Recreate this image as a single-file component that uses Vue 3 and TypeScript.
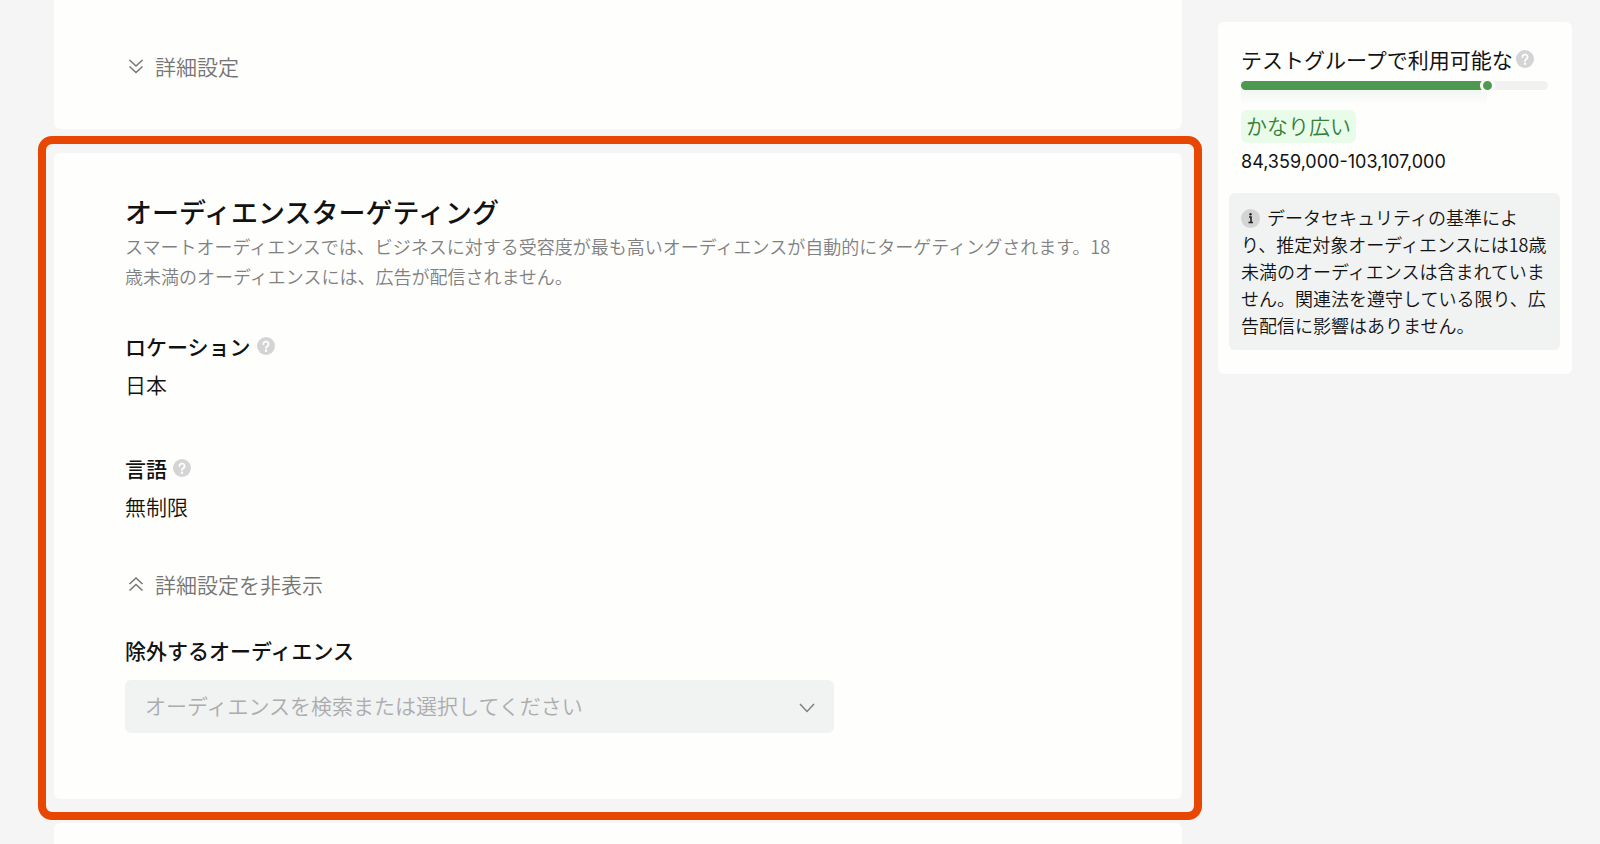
<script setup lang="ts">
import { ref } from 'vue'

interface Field {
  label: string
  value: string
}

const fields: Field[] = [
  { label: 'ロケーション', value: '日本' },
  { label: '言語', value: '無制限' },
]

const reach = 80
const advancedOpen = ref(true)
const groupOpen = ref(false)
</script>

<template>
  <div class="page">
    <main class="main">
      <section class="card card-top">
        <button type="button" class="toggle" :aria-expanded="groupOpen" @click="groupOpen = !groupOpen">
          <svg class="double" viewBox="0 0 16 16" aria-hidden="true">
            <path d="M1.5 2l6.5 6 6.5-6M1.5 8.500l6.500 6 6.500-6" />
          </svg>
          <span>詳細設定</span>
        </button>
      </section>

      <div class="frame">
        <section class="card targeting">
          <h2 class="title">オーディエンスターゲティング</h2>
          <p class="desc">
            スマートオーディエンスでは、ビジネスに対する受容度が最も高いオーディエンスが自動的にターゲティングされます。18歳未満のオーディエンスには、広告が配信されません。
          </p>

          <dl class="fields">
            <div v-for="field in fields" :key="field.label" class="field">
              <dt class="label">
                {{ field.label }}
                <button type="button" class="help" :aria-label="field.label">
                  <svg viewBox="0 0 18 18" aria-hidden="true">
                    <circle cx="9" cy="9" r="9" />
                    <path d="M6.400 7a2.600 2.500 0 1 1 4.200 2c-.9.700-1.600 1-1.600 2.100" />
                    <circle class="dot" cx="9" cy="13.700" r="1.200" />
                  </svg>
                </button>
              </dt>
              <dd class="value">{{ field.value }}</dd>
            </div>
          </dl>

          <button type="button" class="toggle" :aria-expanded="advancedOpen" @click="advancedOpen = !advancedOpen">
            <svg class="double" viewBox="0 0 16 16" aria-hidden="true">
              <path d="M1.500 8l6.500-6 6.500 6M1.500 14.500l6.500-6 6.500 6" />
            </svg>
            <span>{{ advancedOpen ? '詳細設定を非表示' : '詳細設定' }}</span>
          </button>

          <div v-show="advancedOpen" class="exclude">
            <label class="label" for="exclude">除外するオーディエンス</label>
            <div class="select-box">
              <select id="exclude" class="select">
                <option value="">オーディエンスを検索または選択してください</option>
              </select>
              <svg class="chevron" viewBox="0 0 16 10" aria-hidden="true">
                <path d="M1 1l7 7.500 7-7.500" />
              </svg>
            </div>
          </div>
        </section>
      </div>

      <section class="card card-next"></section>
    </main>

    <aside class="card side">
      <h3 class="side-title">
        テストグループで利用可能な
        <button type="button" class="help" aria-label="ヘルプ">
          <svg viewBox="0 0 18 18" aria-hidden="true">
            <circle cx="9" cy="9" r="9" />
            <path d="M6.400 7a2.600 2.500 0 1 1 4.200 2c-.9.700-1.600 1-1.600 2.100" />
            <circle class="dot" cx="9" cy="13.700" r="1.200" />
          </svg>
        </button>
      </h3>
      <div class="meter" role="progressbar" :aria-valuenow="reach" aria-valuemin="0" aria-valuemax="100">
        <div class="meter-fill" :style="{ width: reach + '%' }"></div>
      </div>
      <span class="tag">かなり広い</span>
      <p class="range">84,359,000-103,107,000</p>
      <p class="note">
        <svg class="info" viewBox="0 0 19 19" aria-hidden="true">
          <circle cx="9.500" cy="9.500" r="9.500" />
          <path d="M8 8h2v5.500M7.500 13.500h4.500" />
          <circle class="dot" cx="9.500" cy="5.300" r="1.200" />
        </svg>データセキュリティの基準により、推定対象オーディエンスには18歳未満のオーディエンスは含まれていません。関連法を遵守している限り、広告配信に影響はありません。
      </p>
    </aside>
  </div>
</template>

<style>
body {
  background: #f5f5f5;
}
</style>

<style scoped>
.page {
  display: flex;
  align-items: flex-start;
  gap: 16px;
  box-sizing: border-box;
  min-height: 100vh;
  padding: 0 28px 0 38px;
  background: #f5f5f5;
  color: #121212;
  font-family: "Noto Sans CJK JP", sans-serif;
  font-size: 21px;
  font-weight: 350;
  line-height: 28px;
  text-spacing-trim: space-all;
}

.page *,
.page *::before,
.page *::after {
  box-sizing: border-box;
}

h2,
h3,
p,
dl,
dd {
  margin: 0;
}

button {
  padding: 0;
  border: 0;
  background: none;
  color: inherit;
  font: inherit;
  cursor: pointer;
}

svg {
  fill: none;
}

.main {
  display: flex;
  flex: 1;
  flex-direction: column;
  min-width: 0;
  min-height: 100vh;
}

.card {
  border-radius: 6px;
  background: #fefefd;
}

.card-top {
  margin: 0 20px 7px 16px;
  padding: 52px 71px 49px;
  border-radius: 0 0 6px 6px;
}

.card-next {
  flex: 1;
  margin: 3px 20px 0 16px;
  border-radius: 6px 6px 0 0;
}

.frame {
  padding: 9px 12px 13px 8px;
  border: 8px solid #e84703;
  border-radius: 14px;
}

.targeting {
  padding: 43px 62px 66px 71px;
}

.title {
  font-size: 27px;
  font-weight: 500;
  line-height: 32px;
}

.desc {
  margin-top: 3px;
  color: #808080;
  font-size: 18px;
  line-height: 30px;
}

.fields {
  display: grid;
  gap: 56px;
  margin: 41px 0 50px;
}

.field {
  display: grid;
  gap: 10px;
}

.label {
  display: flex;
  align-items: center;
  gap: 6px;
  font-weight: 500;
}

.help {
  flex: none;
  width: 18px;
  height: 18px;
}

.help svg {
  display: block;
  fill: #d4d4d4;
}

.help path {
  fill: none;
  stroke: #fff;
  stroke-width: 1.8;
  stroke-linecap: round;
}

.help .dot {
  fill: #fff;
}

.toggle {
  display: flex;
  align-items: center;
  gap: 11px;
  padding-left: 3px;
  color: #757575;
}

.double {
  width: 16px;
  height: 16px;
  stroke: currentColor;
  stroke-width: 1.5;
}

.exclude {
  display: grid;
  gap: 16px;
  max-width: 709px;
  margin-top: 38px;
}

.select-box {
  position: relative;
}

.select {
  display: block;
  width: 100%;
  height: 53px;
  padding: 0 48px 4px 20px;
  border: 0;
  border-radius: 6px;
  background: #f1f2f2;
  color: #acacac;
  font: inherit;
  appearance: none;
}

.chevron {
  position: absolute;
  top: 23px;
  right: 19px;
  width: 16px;
  height: 10px;
  stroke: #808080;
  stroke-width: 1.5;
  pointer-events: none;
}

.side {
  flex: none;
  width: 354px;
  margin-top: 22px;
  padding: 23px 12px 24px 11px;
}

.side-title {
  display: flex;
  align-items: center;
  gap: 3px;
  margin-left: 12px;
  font-size: 21px;
  font-weight: 400;
  white-space: nowrap;
}

.meter {
  height: 9px;
  margin: 8px 12px 20px;
  border-radius: 5px;
  background: #f1f1f1;
}

.meter-fill {
  position: relative;
  height: 9px;
  border-radius: 5px;
  background: #4c994f;
}

.meter-fill::before {
  content: "";
  position: absolute;
  top: 9px;
  left: 0;
  right: 0;
  height: 14px;
  background: linear-gradient(#f1f6f1, #fefefd);
}

.meter-fill::after {
  content: "";
  position: absolute;
  top: -3px;
  right: -8px;
  width: 15px;
  height: 15px;
  border: 3px solid #fefefd;
  border-radius: 50%;
  background: #4c994f;
}

.tag {
  display: block;
  width: fit-content;
  margin-left: 12px;
  padding: 1px 5px 4px;
  border-radius: 6px;
  background: #e9fce9;
  color: #34803a;
}

.range {
  margin: 5px 12px 17px;
  font-family: Inter, sans-serif;
  font-size: 18px;
  font-weight: 400;
}

.note {
  padding: 11px 8px 11px 12px;
  border-radius: 6px;
  background: #f1f2f2;
  font-size: 18px;
  line-height: 27px;
}

.info {
  width: 19px;
  height: 19px;
  margin-right: 7px;
  vertical-align: -3px;
  fill: #d4d4d4;
}

.info path {
  fill: none;
  stroke: #222;
  stroke-width: 1.6;
}

.info .dot {
  fill: #222;
}
</style>
